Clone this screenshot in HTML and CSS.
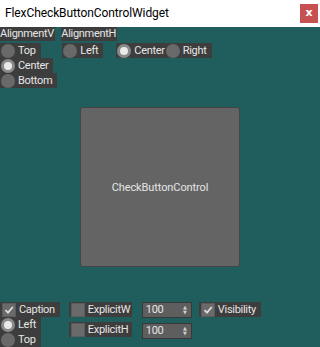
FILE: index.html
```html
<!DOCTYPE html>
<html>
<head>
<meta charset="utf-8">
<link rel="stylesheet" href="styles.css">
</head>
<body>
<div class="titlebar">
  <span class="title">FlexCheckButtonControlWidget</span>
  <span class="close">x</span>
</div>
<div class="top">
  <div class="group gv">
    <div class="label">AlignmentV</div>
    <div class="col">
      <div class="item"><span class="radio"></span><span class="txt">Top</span></div>
      <div class="item"><span class="radio on"></span><span class="txt">Center</span></div>
      <div class="item"><span class="radio"></span><span class="txt">Bottom</span></div>
    </div>
  </div>
  <div class="group gh">
    <div class="label">AlignmentH</div>
    <div class="row">
      <div class="item"><span class="radio"></span><span class="txt">Left</span></div>
      <div class="item sp"><span class="radio on"></span><span class="txt">Center</span></div>
      <div class="item"><span class="radio"></span><span class="txt">Right</span></div>
    </div>
  </div>
</div>
<div class="stage">
  <div class="box">CheckButtonControl</div>
</div>
<div class="bottom">
  <div class="bcol c1">
    <div class="item"><span class="check"><svg viewBox="0 0 12 12" width="12" height="12"><path d="M2.5 6.2 L5 8.6 L9.8 3" fill="none" stroke="#dcdcdc" stroke-width="1.8"/></svg></span><span class="txt">Caption</span></div>
    <div class="item"><span class="radio on"></span><span class="txt">Left</span></div>
    <div class="item"><span class="radio"></span><span class="txt">Top</span></div>
  </div>
  <div class="bcol c2">
    <div class="item"><span class="check"></span><span class="txt">ExplicitW</span></div>
    <div class="item"><span class="check"></span><span class="txt">ExplicitH</span></div>
  </div>
  <div class="bcol c3">
    <div class="spin"><span>100</span><span class="arr">&#9650;<br>&#9660;</span></div>
    <div class="spin"><span>100</span><span class="arr">&#9650;<br>&#9660;</span></div>
  </div>
  <div class="bcol c4">
    <div class="item"><span class="check"><svg viewBox="0 0 12 12" width="12" height="12"><path d="M2.5 6.2 L5 8.6 L9.8 3" fill="none" stroke="#dcdcdc" stroke-width="1.8"/></svg></span><span class="txt">Visibility</span></div>
  </div>
</div>
</body>
</html>
```
FILE: styles.css
```css
html, body {
  margin: 0;
  padding: 0;
}
body {
  width: 320px;
  height: 347px;
  overflow: hidden;
  background: #205e5e;
  font-family: Roboto, "Open Sans", sans-serif;
  font-size: 11px;
  letter-spacing: -0.3px;
  color: #e6e6e6;
}
.titlebar {
  height: 27px;
  background: #ffffff;
  display: flex;
  align-items: flex-start;
  justify-content: space-between;
}
.title {
  color: #000;
  font-size: 12px;
  letter-spacing: -0.1px;
  margin: 6px 0 0 5px;
  line-height: 15px;
}
.close {
  width: 18px;
  height: 19px;
  margin: 4px 2px 0 0;
  background: #c75050;
  color: #fff;
  font-weight: bold;
  font-size: 11px;
  line-height: 17px;
  text-align: center;
  font-family: "DejaVu Sans", sans-serif;
  letter-spacing: 0;
}
.top {
  display: flex;
  gap: 4px;
}
.label {
  display: inline-block;
  background: #3d3d3d;
  height: 14px;
  line-height: 14px;
  padding: 0 1px 0 0;
  margin-bottom: 2px;
}
.col {
  display: flex;
  flex-direction: column;
  align-items: flex-start;
}
.row {
  display: flex;
  align-items: flex-start;
}
.gh .row { margin-left: 1px; }
.item {
  display: flex;
  align-items: center;
  height: 15px;
  background: #3d3d3d;
  padding: 0 5px 0 1px;
}
.sp { margin-left: 13px; padding-right: 0; }
.radio {
  width: 14px;
  height: 14px;
  border-radius: 50%;
  background: #696969;
  box-sizing: border-box;
  flex: none;
}
.radio.on {
  background: #eaeaea;
  border: 3px solid #8a8a8a;
}
.txt {
  margin-left: 3px;
  line-height: 15px;
}
.check {
  width: 12px;
  height: 12px;
  margin-left: 1px;
  background: #6a6a6a;
  border: 1px solid #5c5c5c;
  flex: none;
  display: flex;
}
.stage {
  display: flex;
  justify-content: center;
  margin-top: 19px;
}
.box {
  width: 160px;
  height: 160px;
  box-sizing: border-box;
  background: #646464;
  border: 1px solid #454545;
  border-radius: 3px;
  display: flex;
  align-items: center;
  justify-content: center;
  color: #e4e4e4;
  font-size: 11px;
  letter-spacing: -0.1px;
}
.bottom {
  display: flex;
  align-items: flex-start;
  margin-top: 35px;
}
.bcol {
  display: flex;
  flex-direction: column;
  align-items: flex-start;
}
.c2 { margin-left: 9px; gap: 5px; }
.c2 .item { width: 63px; box-sizing: border-box; }
.c3 { margin-left: 10px; gap: 5px; }
.c4 { margin-left: 7px; }
.spin {
  width: 50px;
  height: 16px;
  box-sizing: border-box;
  border: 1px solid #383838;
  background: #5e5e5e;
  display: flex;
  align-items: center;
  justify-content: space-between;
  padding: 0 4px 0 3px;
  line-height: 14px;
}
.arr {
  font-size: 5px;
  line-height: 5px;
  color: #d0d0d0;
  font-family: "DejaVu Sans", sans-serif;
  letter-spacing: 0;
}
```
